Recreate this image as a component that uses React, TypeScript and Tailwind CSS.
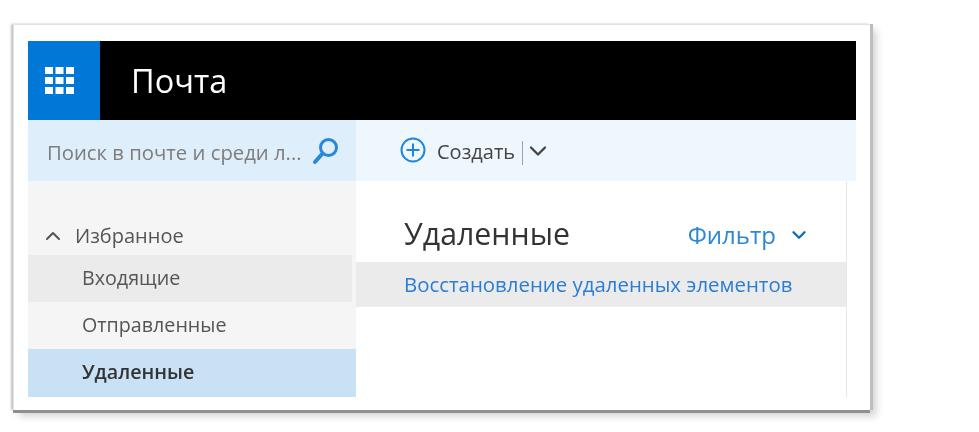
import React from 'react';
import { ChevronDown, ChevronUp } from 'lucide-react';

const font = 'font-["Open_Sans","Noto_Sans",sans-serif]';

const WaffleIcon = () => (
  <svg width="29" height="27" viewBox="0 0 29 27" fill="#ffffff">
    {[0, 10, 20].map((y) =>
      [0, 10.5, 21].map((x) => <rect key={`${x}-${y}`} x={x} y={y} width="8" height="7" />),
    )}
  </svg>
);

const SearchIcon = () => (
  <svg width="28" height="28" viewBox="0 0 28 28" fill="none" stroke="#2b88d8">
    <circle cx="16.5" cy="10.5" r="8" strokeWidth="3" />
    <path d="M10.5 16.5 L3 25" strokeWidth="4" strokeLinecap="round" />
  </svg>
);

const PlusCircleIcon = () => (
  <svg width="26" height="26" viewBox="0 0 26 26" fill="none" stroke="#1f86dc" strokeWidth="2" className="-mt-[2px]">
    <circle cx="13" cy="13" r="11.5" />
    <path d="M13 6.5 V19.5 M6.5 13 H19.5" />
  </svg>
);

export default function App() {
  return (
    <div className={`min-h-[432px] w-[979px] bg-white pl-[13px] pt-[24px] ${font}`}>
      <div className="h-[386px] w-[857px] border-t border-l border-[#e2e2e2] bg-white pl-[14px] pt-[16px] shadow-[3px_0_0_#bdbdbd,0_3px_0_#8f8f8f,6px_6px_8px_#cfcfcf,-2px_0_2px_#c4c4c4]">
        <div className="w-[828px] blur-[0.6px]">
          <header className="flex h-[79px] bg-black">
            <div className="flex w-[72px] items-center bg-[#0078d7] pl-[17px]">
              <WaffleIcon />
            </div>
            <h1 className="pl-[31px] text-[32.5px] leading-[79px] text-white">Почта</h1>
          </header>

          <div className="flex h-[61px]">
            <div className="flex w-[328px] items-center justify-between bg-[#dfeefb] pl-[19px] pr-[16px]">
              <span className="pt-[3px] text-[20.3px] text-[#7d7d7d]">Поиск в почте и среди л...</span>
              <SearchIcon />
            </div>
            <div className="flex flex-1 items-center bg-[#eff7fe] pl-[44px] text-[20px] text-[#444444]">
              <PlusCircleIcon />
              <span className="ml-[11px] pt-[3px]">Создать</span>
              <span className="ml-[7px] mt-[4px] h-[24px] w-px bg-[#9aa5ad]" />
              <ChevronDown size={28} strokeWidth={2} className="ml-px text-[#444444]" />
            </div>
          </div>

          <div className="flex h-[216px]">
            <nav className="flex w-[328px] flex-col bg-[#f5f5f5] pt-[37px] text-[19.7px] text-[#555555]">
              <div className="flex h-[37px] items-center pb-[2px] pl-[13px]">
                <ChevronUp size={24} strokeWidth={2} className="text-[#555555]" />
                <span className="ml-[10px] text-[20px]">Избранное</span>
              </div>
              <div className="mr-[4px] flex h-[47px] items-center bg-[#ebebeb] pb-[2px] pl-[54px]">Входящие</div>
              <div className="flex h-[47px] items-center pb-[2px] pl-[54px]">Отправленные</div>
              <div className="flex h-[48px] items-center bg-[#c9e1f5] pb-[2px] pl-[54px] font-semibold text-[#333333]">Удаленные</div>
            </nav>
            <main className="w-[491px] border-r border-[#e8e8e8] bg-white pt-[28px]">
              <div className="flex h-[53px] items-start justify-between pl-[48px] pr-[36px]">
                <h2 className="text-[30.3px] leading-[50px] text-[#333333]">Удаленные</h2>
                <div className="flex h-[52px] items-center text-[24px] text-[#2b88d8]">
                  Фильтр
                  <ChevronDown size={22} strokeWidth={2.6} className="ml-[12px] text-[#0f6cbd]" />
                </div>
              </div>
              <div className="flex h-[45px] items-center bg-[#ebebeb] pl-[48px] text-[20.4px] text-[#2b7cd3]">
                Восстановление удаленных элементов
              </div>
            </main>
          </div>
        </div>
      </div>
    </div>
  );
}
